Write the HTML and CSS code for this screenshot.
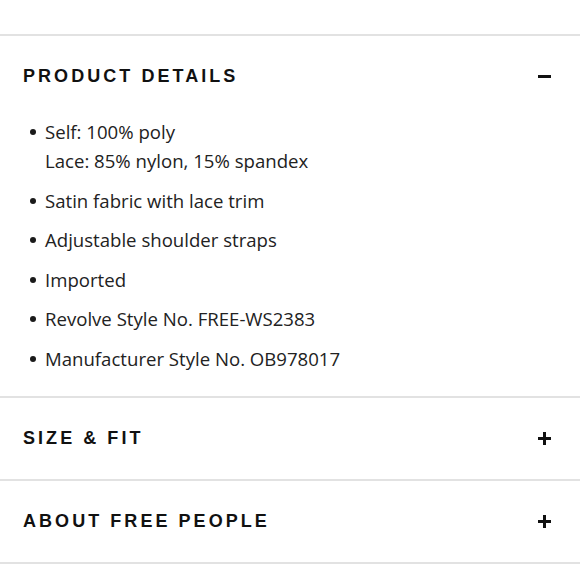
FILE: index.html
```html
<!DOCTYPE html>
<html>
<head>
<meta charset="utf-8">
<link rel="stylesheet" href="styles.css">
</head>
<body>
<div class="accordion">
  <section class="panel open">
    <div class="panel-head">
      <h2 class="panel-title">PRODUCT DETAILS</h2>
      <span class="icon minus"></span>
    </div>
    <ul class="details">
      <li>Self: 100% poly<br>Lace: 85% nylon, 15% spandex</li>
      <li>Satin fabric with lace trim</li>
      <li>Adjustable shoulder straps</li>
      <li>Imported</li>
      <li>Revolve Style No. FREE-WS2383</li>
      <li>Manufacturer Style No. OB978017</li>
    </ul>
  </section>
  <section class="panel">
    <div class="panel-head">
      <h2 class="panel-title">SIZE &amp; FIT</h2>
      <span class="icon plus"></span>
    </div>
  </section>
  <section class="panel">
    <div class="panel-head">
      <h2 class="panel-title">ABOUT FREE PEOPLE</h2>
      <span class="icon plus"></span>
    </div>
  </section>
</div>
</body>
</html>
```
FILE: styles.css
```css
html, body {
  margin: 0;
  padding: 0;
  background: #fff;
}
.accordion {
  padding-top: 34px;
}
.panel {
  border-top: 2px solid #e2e2e2;
}
.panel:last-child {
  border-bottom: 2px solid #e2e2e2;
}
.panel-head {
  height: 81px;
  display: flex;
  align-items: center;
  justify-content: space-between;
  padding: 0 29px 0 23px;
}
.panel-title {
  margin: 0;
  font-family: "Liberation Sans", Arial, sans-serif;
  font-weight: 700;
  font-size: 18px;
  letter-spacing: 3.05px;
  color: #111;
}
.icon {
  position: relative;
  width: 13px;
  height: 13px;
  display: block;
}
.icon::before,
.icon::after {
  content: "";
  position: absolute;
  background: #111;
}
.icon::before {
  left: 0;
  top: 5px;
  width: 13px;
  height: 3px;
}
.plus::after {
  left: 5px;
  top: 0;
  width: 3px;
  height: 13px;
}
.minus::after {
  display: none;
}
.details {
  list-style: none;
  margin: 0;
  padding: 0 0 23px 45px;
  font-family: "Open Sans", sans-serif;
  font-size: 18.6px;
  line-height: 29px;
  color: #222;
}
.details li {
  position: relative;
  margin-bottom: 10.5px;
}
.details li:last-child {
  margin-bottom: 0;
}
.details li::before {
  content: "";
  position: absolute;
  left: -15px;
  top: 12px;
  width: 6px;
  height: 6px;
  border-radius: 50%;
  background: #1a1a1a;
}
```
